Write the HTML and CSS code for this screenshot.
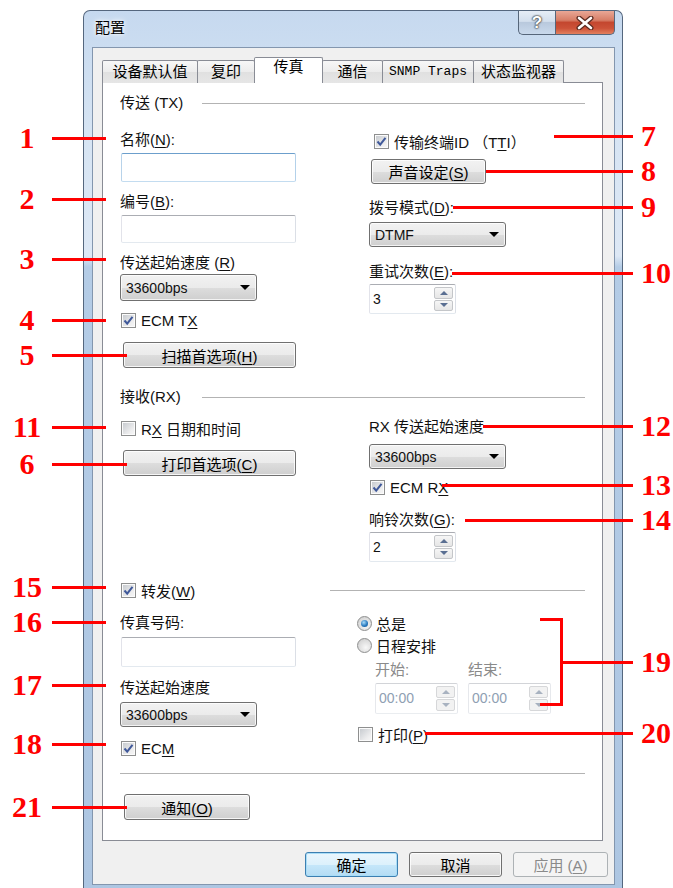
FILE: index.html
```html
<!DOCTYPE html>
<html lang="zh-CN">
<head>
<meta charset="UTF-8" />
<title>配置</title>
<link rel="stylesheet" href="styles.css">
</head>
<body>

<div class="window">
  <div class="titlebar">
    <span class="title">配置</span>
    <span class="cap help">?</span>
    <span class="cap close">
      <svg width="22" height="14" viewBox="0 0 22 14"><path d="M5 2 L17 12 M17 2 L5 12" stroke="#5a2a20" stroke-width="5" stroke-linecap="round"/><path d="M5 2 L17 12 M17 2 L5 12" stroke="#fff" stroke-width="2.6" stroke-linecap="round"/></svg>
    </span>
  </div>

  <div class="client">
    <div class="tabs">
      <span class="tab t1">设备默认值</span>
      <span class="tab t2">复印</span>
      <span class="tab t3 on">传真</span>
      <span class="tab t4">通信</span>
      <span class="tab t5 mono">SNMP Traps</span>
      <span class="tab t6">状态监视器</span>
    </div>

    <div class="panel">
      <!-- TX -->
      <div class="head"><span class="head-label">传送 (TX)</span><span class="rule"></span></div>
      <div class="cols">
        <div class="col-l">
          <div class="lbl mt19">名称(<u>N</u>):</div>
          <div class="edit hot mt4 h29"></div>
          <div class="lbl mt11">编号(<u>B</u>):</div>
          <div class="edit mt4 h28"></div>
          <div class="lbl mt11">传送起始速度 (<u>R</u>)</div>
          <div class="combo mt2 h27">33600bps</div>
          <div class="check mt10"><span class="cb"><svg viewBox="0 0 13 13" width="13" height="13"><path d="M2.5 6.5 L5.2 9.6 L10.5 2.8" fill="none" stroke="#40599a" stroke-width="2"/></svg></span><span>ECM T<u>X</u></span></div>
          <div class="btn wide mt13"><span>扫描首选项(<u>H</u>)</span></div>
        </div>
        <div class="col-r">
          <div class="check mt20 ind4"><span class="cb"><svg viewBox="0 0 13 13" width="13" height="13"><path d="M2.5 6.5 L5.2 9.6 L10.5 2.8" fill="none" stroke="#40599a" stroke-width="2"/></svg></span><span>传输终端ID （T<u>T</u>I）</span></div>
          <div class="btn sound mt9"><span>声音设定(<u>S</u>)</span></div>
          <div class="lbl mt15">拨号模式(<u>D</u>):</div>
          <div class="combo mt5">DTMF</div>
          <div class="lbl mt16">重试次数(<u>E</u>):</div>
          <div class="spin mt3"><span class="val">3</span><span class="arrows"><span class="up"></span><span class="down"></span></span></div>
        </div>
      </div>

      <!-- RX -->
      <div class="head mt20"><span class="head-label">接收(RX)</span><span class="rule"></span></div>
      <div class="cols">
        <div class="col-l">
          <div class="check mt13"><span class="cb"></span><span>R<u>X</u> 日期和时间</span></div>
          <div class="btn wide mt13"><span>打印首选项(<u>C</u>)</span></div>
        </div>
        <div class="col-r">
          <div class="lbl mt12">RX 传送起始速度</div>
          <div class="combo mt8">33600bps</div>
          <div class="check mt9"><span class="cb"><svg viewBox="0 0 13 13" width="13" height="13"><path d="M2.5 6.5 L5.2 9.6 L10.5 2.8" fill="none" stroke="#40599a" stroke-width="2"/></svg></span><span>ECM R<u>X</u></span></div>
          <div class="lbl mt15">响铃次数(<u>G</u>):</div>
          <div class="spin mt3"><span class="val">2</span><span class="arrows"><span class="up"></span><span class="down"></span></span></div>
        </div>
      </div>

      <!-- forward -->
      <div class="head fwd mt19">
        <div class="check"><span class="cb"><svg viewBox="0 0 13 13" width="13" height="13"><path d="M2.5 6.5 L5.2 9.6 L10.5 2.8" fill="none" stroke="#40599a" stroke-width="2"/></svg></span><span>转发(<u>W</u>)</span></div>
        <span class="rule"></span>
      </div>
      <div class="cols">
        <div class="col-l narrow">
          <div class="lbl mt15">传真号码:</div>
          <div class="edit mt5 h30"></div>
          <div class="lbl mt12">传送起始速度</div>
          <div class="combo mt5">33600bps</div>
          <div class="check mt12"><span class="cb"><svg viewBox="0 0 13 13" width="13" height="13"><path d="M2.5 6.5 L5.2 9.6 L10.5 2.8" fill="none" stroke="#40599a" stroke-width="2"/></svg></span><span>EC<u>M</u></span></div>
        </div>
        <div class="col-r">
          <div class="radio mt15"><span class="rb on"></span><span>总是</span></div>
          <div class="radio mt4"><span class="rb"></span><span>日程安排</span></div>
          <div class="sched">
            <div class="lbl off">开始:</div>
            <div class="lbl off">结束:</div>
            <div class="spin off small"><span class="val">00:00</span><span class="arrows"><span class="up"></span><span class="down"></span></span></div>
            <div class="spin off small"><span class="val">00:00</span><span class="arrows"><span class="up"></span><span class="down"></span></span></div>
          </div>
          <div class="check mt11"><span class="cb"></span><span>打印(<u>P</u>)</span></div>
        </div>
      </div>

      <div class="rule bottom-rule"></div>
      <div class="btn notify"><span>通知(<u>O</u>)</span></div>
    </div>

    <div class="footer">
      <span class="btn dlg default">确定</span>
      <span class="btn dlg">取消</span>
      <span class="btn dlg apply"><span>应用 (<u>A</u>)</span></span>
    </div>
  </div>
</div>

<!-- callouts -->
<div class="call left c1"><b class="num">1</b><i class="ln"></i></div>
<div class="call left c2"><b class="num">2</b><i class="ln"></i></div>
<div class="call left c3"><b class="num">3</b><i class="ln"></i></div>
<div class="call left c4"><b class="num">4</b><i class="ln"></i></div>
<div class="call left c5"><b class="num">5</b><i class="ln long"></i></div>
<div class="call left c11"><b class="num">11</b><i class="ln"></i></div>
<div class="call left c6"><b class="num">6</b><i class="ln long"></i></div>
<div class="call left c15"><b class="num">15</b><i class="ln"></i></div>
<div class="call left c16"><b class="num">16</b><i class="ln"></i></div>
<div class="call left c17"><b class="num">17</b><i class="ln"></i></div>
<div class="call left c18"><b class="num">18</b><i class="ln"></i></div>
<div class="call left c21"><b class="num">21</b><i class="ln long"></i></div>

<div class="call right c7"><i class="ln"></i><b class="num">7</b></div>
<div class="call right c8"><i class="ln"></i><b class="num">8</b></div>
<div class="call right c9"><i class="ln"></i><b class="num">9</b></div>
<div class="call right c10"><i class="ln"></i><b class="num">10</b></div>
<div class="call right c12"><i class="ln"></i><b class="num">12</b></div>
<div class="call right c13"><i class="ln"></i><b class="num">13</b></div>
<div class="call right c14"><i class="ln"></i><b class="num">14</b></div>
<div class="bracket"></div>
<div class="call right c19"><i class="ln"></i><b class="num">19</b></div>
<div class="call right c20"><i class="ln"></i><b class="num">20</b></div>

</body>
</html>
```

FILE: styles.css
```css
* { box-sizing: border-box; }
body {
  margin: 0;
  width: 673px; height: 888px;
  overflow: hidden;
  position: relative;
  background: #fff;
  color: #111;
  font-family: "Liberation Sans", "Noto Sans CJK SC", sans-serif;
  font-size: 15px;
}
u { text-decoration: underline; text-underline-offset: 2px; }

/* window frame */
.window {
  margin: 10px 0 0 83px;
  width: 540px; height: 884px;
  border: 1px solid #55677e;
  border-bottom: none;
  border-radius: 7px 7px 0 0;
  padding: 0 7px 0 8px;
  background: linear-gradient(to bottom, #c6d9ef 0, #d6e4f3 120px, #dde8f5 245px, #b4cce6 256px, #adc6e2 100%);
}
.titlebar { display: flex; height: 36px; }
.title {
  flex: 1;
  padding: 8px 0 0 3px;
  line-height: 18px;
  color: #000;
  text-shadow: 0 0 6px #fff, 0 0 3px #fff;
}
.cap {
  height: 24px;
  display: flex; align-items: center; justify-content: center;
  border: 1px solid #56667a;
  border-top: none;
}
.help {
  width: 37px;
  border-right: none;
  border-radius: 0 0 0 5px;
  background: linear-gradient(#e6edf6, #d3dfed 45%, #b9c9dd 50%, #c9d9ec);
  color: #fff;
  font: bold 17px "Liberation Sans", sans-serif;
  text-shadow: 0 0 1px #333, 0 0 2px #444, 0 0 2px #444;
}
.close {
  width: 60px;
  border-radius: 0 0 5px 0;
  background: linear-gradient(#e9a796, #d77e67 40%, #c4472f 50%, #cc5238 75%, #e2805f);
}

.client {
  height: 838px;
  border: 1px solid #8396ae;
  background: #f0f0f0;
  padding: 9px 6px 0 9px;
}

/* tabs */
.tabs { display: flex; align-items: flex-end; height: 26px; }
.tab {
  height: 23px;
  margin-left: -1px;
  border: 1px solid #898c95;
  border-bottom: none;
  border-radius: 2px 2px 0 0;
  background: linear-gradient(#f7f7f7, #ececec 50%, #e0e0e0 52%, #e6e6e6);
  text-align: center;
  line-height: 21px;
  color: #000;
  white-space: nowrap;
}
.tab.t1 { margin-left: 0; width: 96px; }
.tab.t2 { width: 58px; }
.tab.t3 { width: 69px; }
.tab.t4 { width: 61px; }
.tab.t5 { width: 92px; }
.tab.t6 { width: 91px; }
.tab.mono { font-family: "Liberation Mono", monospace; font-size: 13px; }
.tab.on {
  height: 26px;
  background: #fff;
  position: relative;
  z-index: 1;
  line-height: 17px;
}

.panel {
  margin-top: -1px;
  width: 501px; height: 759px;
  border: 1px solid #898c95;
  background: #fff;
  padding: 11px 17px 0 17px;
}

.head { display: flex; align-items: center; height: 18px; }
.head-label { width: 82px; line-height: 18px; white-space: nowrap; }
.rule { flex: 1; height: 1px; background: #b3b3b3; }
.head.fwd .check { width: 210px; }

.cols { display: flex; }
.col-l { width: 249px; flex: none; }
.col-l.narrow { width: 237px; }
.col-r { flex: 1; }

.lbl { height: 18px; line-height: 18px; white-space: nowrap; }
.lbl.off { color: #8a8a8a; }

.edit {
  width: 175px; height: 28px;
  margin-left: 1px;
  background: #fff;
  border: 1px solid;
  border-color: #abadb3 #dbdfe6 #e3e9ef #e2e3ea;
  border-radius: 2px;
}
.edit.hot { border-color: #6c9fcc #b3d1ea #c3dcf0 #b8d3ea; }
.h28 { height: 28px; }
.h29 { height: 29px; }
.h30 { height: 30px; }

.combo {
  display: flex; align-items: center; justify-content: space-between;
  width: 137px; height: 25px;
  padding: 0 6px 0 5px;
  border: 1px solid #707070;
  border-radius: 3px;
  background: linear-gradient(#f2f2f2, #ebebeb 50%, #dddddd 51%, #cfcfcf);
  box-shadow: inset 0 0 0 1px rgba(255,255,255,.75);
  font-size: 14px;
}
.combo.h27 { height: 27px; }
.combo::after {
  content: "";
  border-left: 5px solid transparent;
  border-right: 5px solid transparent;
  border-top: 5px solid #000;
}

.btn {
  display: flex; align-items: center; justify-content: center;
  height: 26px;
  border: 1px solid #707070;
  border-radius: 3px;
  background: linear-gradient(#f2f2f2, #ebebeb 50%, #dddddd 51%, #cfcfcf);
  box-shadow: inset 0 0 0 1px rgba(255,255,255,.8);
  color: #000;
  white-space: nowrap;
}
.btn.wide { width: 173px; margin-left: 3px; }
.btn.sound { width: 115px; height: 25px; margin-left: 2px; }
.btn.notify { width: 126px; margin: 20px 0 0 4px; }

.check, .radio {
  display: flex; align-items: center; gap: 5px;
  height: 18px;
  white-space: nowrap;
}
.radio { gap: 4px; }
.ind4 { margin-left: 4px; }
.cb {
  width: 15px; height: 15px;
  flex: none;
  margin-left: 1px;
  border: 1px solid #8e8f8f;
  background: linear-gradient(135deg, #c3c7cc, #eeeeef 70%, #f7f7f7);
  box-shadow: inset 0 0 0 1px #fbfbfb;
}
.cb svg { display: block; }
.rb {
  width: 15px; height: 15px;
  flex: none;
  border-radius: 50%;
  border: 1px solid #8e8f8f;
  background: radial-gradient(circle at 60% 65%, #f8f8f8, #dcdcdc 60%, #c4c4c4);
  display: flex; align-items: center; justify-content: center;
}
.rb.on::after {
  content: "";
  width: 7px; height: 7px;
  border-radius: 50%;
  background: radial-gradient(circle at 40% 35%, #a9dcfa, #2c7cc0 55%, #0f4c88);
}

.spin {
  display: flex;
  width: 87px; height: 30px;
  padding: 2px 2px 2px 3px;
  background: #fff;
  border: 1px solid;
  border-color: #abadb3 #dbdfe6 #e3e9ef #e2e3ea;
  border-radius: 2px;
  font-size: 14px;
}
.spin .val { flex: 1; line-height: 24px; }
.arrows { width: 19px; display: flex; flex-direction: column; gap: 1px; }
.arrows span {
  flex: 1;
  display: flex; align-items: center; justify-content: center;
  border: 1px solid #c4c6c9;
  border-radius: 2px;
  background: linear-gradient(#f6f6f6, #e6e6e6);
}
.arrows .up::after {
  content: "";
  border-left: 4px solid transparent;
  border-right: 4px solid transparent;
  border-bottom: 4px solid #5a6f92;
}
.arrows .down::after {
  content: "";
  border-left: 4px solid transparent;
  border-right: 4px solid transparent;
  border-top: 4px solid #5a6f92;
}
.spin.off { border-color: #d2d4d8 #e6e8ec #eaedf0 #e6e8ec; }
.spin.off .val { color: #8fa0b3; }
.spin.off .arrows span { border-color: #d6d7d9; background: #f2f2f2; }
.spin.off .up::after { border-bottom-color: #a8b2c0; }
.spin.off .down::after { border-top-color: #a8b2c0; }
.spin.small { width: 83px; height: 31px; }

.sched {
  display: grid;
  grid-template-columns: 93px 93px;
  row-gap: 4px;
  margin: 7px 0 0 18px;
}

.bottom-rule { flex: none; margin-top: 16px; }

.footer {
  display: flex; justify-content: flex-end; gap: 11px;
  margin-top: 11px;
}
.btn.dlg { width: 93px; height: 25px; }
.btn.default {
  border-color: #3c7fb1;
  background: linear-gradient(#eaf6fd, #dcf1fc 50%, #c5e7fa 51%, #b4dcf4);
  box-shadow: inset 0 0 0 1px #a9ddf7;
}
.btn.apply {
  width: 95px;
  border-color: #adb2b5;
  background: #f4f4f4;
  box-shadow: none;
  color: #8a8a8a;
}

/* spacing */
.mt2 { margin-top: 2px; }
.mt3 { margin-top: 3px; }
.mt4 { margin-top: 4px; }
.mt5 { margin-top: 5px; }
.mt8 { margin-top: 8px; }
.mt9 { margin-top: 9px; }
.mt10 { margin-top: 10px; }
.mt11 { margin-top: 11px; }
.mt12 { margin-top: 12px; }
.mt13 { margin-top: 13px; }
.mt15 { margin-top: 15px; }
.mt16 { margin-top: 16px; }
.mt19 { margin-top: 19px; }
.mt20 { margin-top: 20px; }

/* red callouts */
.call {
  position: absolute;
  display: flex; align-items: center;
  height: 30px;
}
.num {
  font: bold 30px/30px "Liberation Serif", serif;
  color: #f00;
}
.ln { display: block; height: 3px; background: #f00; }
.call.left { left: 7px; }
.call.left .num { width: 40px; text-align: center; }
.call.left .ln { width: 54px; margin-left: 5px; }
.call.left .ln.long { width: 75px; }
.call.right { right: 0; }
.call.right .ln { flex: 1; }
.call.right .num { width: 32px; margin-left: 8px; text-align: left; }

.c1 { top: 123px; }
.c2 { top: 184px; }
.c3 { top: 244px; }
.c4 { top: 305px; }
.c5 { top: 340px; }
.c11 { top: 412px; }
.c6 { top: 449px; }
.c15 { top: 572px; }
.c16 { top: 607px; }
.c17 { top: 670px; }
.c18 { top: 729px; }
.c21 { top: 792px; }

.c7 { top: 121px; left: 554px; }
.c8 { top: 156px; left: 486px; }
.c9 { top: 192px; left: 453px; }
.c10 { top: 258px; left: 452px; }
.c12 { top: 411px; left: 483px; }
.c13 { top: 470px; left: 442px; }
.c14 { top: 505px; left: 465px; }
.c19 { top: 647px; left: 563px; }
.c20 { top: 718px; left: 425px; }

.bracket {
  position: absolute;
  left: 540px; top: 618px;
  width: 23px; height: 88px;
  border: 3px solid #f00;
  border-left: none;
}
```
